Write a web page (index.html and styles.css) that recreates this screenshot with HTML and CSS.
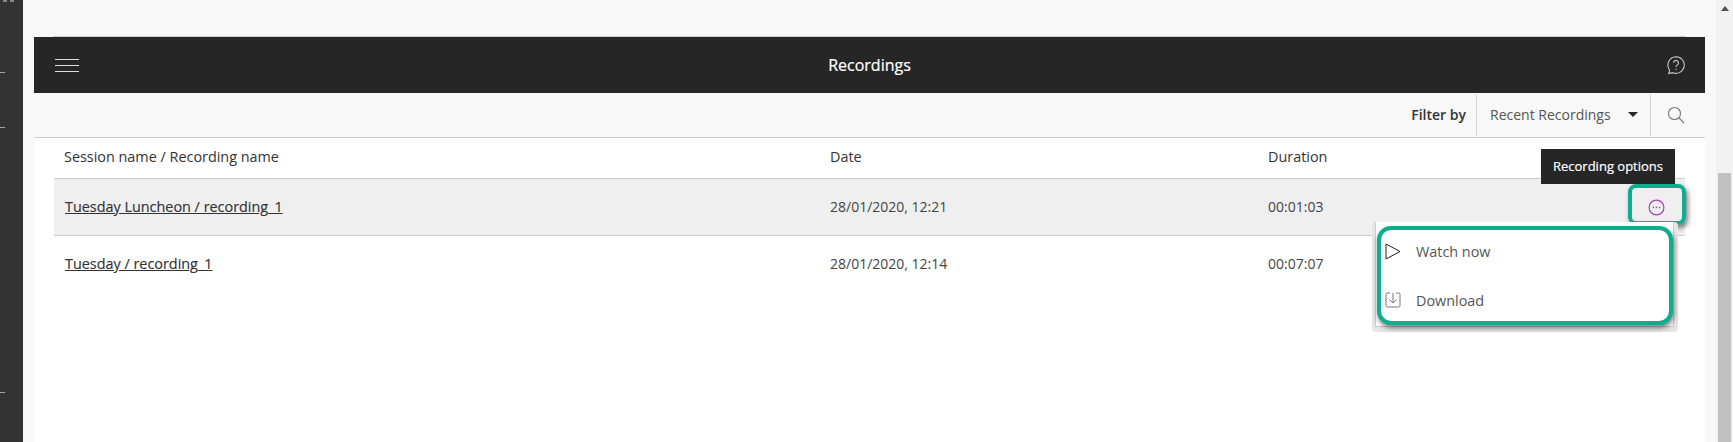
FILE: index.html
```html
<!DOCTYPE html>
<html lang="en">
<head>
  <meta charset="UTF-8" />
  <title>Recordings</title>
  <link rel="stylesheet" href="styles.css">
</head>
<body>
  <div class="rail">
    <div class="rail-dots"><span></span><span></span></div>
    <i class="tick tick-1"></i>
    <i class="tick tick-2"></i>
    <i class="tick tick-3"></i>
  </div>

  <main class="page">
    <div class="top-line"></div>
    <header class="title-bar">
      <svg class="menu-icon" width="24" height="13" viewBox="0 0 24 13"><path d="M0 .5h24M0 6.500h24M0 12.500h24" stroke="#ddd" fill="none"/></svg>
      <h1>Recordings</h1>
      <svg class="help-icon" width="20" height="20" viewBox="0 0 18 18" fill="none" stroke="#ccc" stroke-width="0.95"><path d="M9 1.500a7.500 7.500 0 1 1-3 14.400l-3.600.7.9-3A7.500 7.500 0 0 1 9 1.500z"/><path d="M6.800 7a2.200 2.200 0 1 1 3.400 1.900c-.8.5-1.200 1-1.200 2"/><path d="M9 12.400v1.200"/></svg>
    </header>

    <div class="toolbar">
      <span class="filter-label">Filter by</span>
      <div class="filter-select">Recent Recordings<i class="caret"></i></div>
      <div class="search">
        <svg width="18" height="18" viewBox="0 0 18 18" fill="none" stroke="#777" stroke-width="1.1"><circle cx="7.500" cy="7.500" r="6"/><path d="M12 12l5 5"/></svg>
      </div>
    </div>

    <section class="content">
      <div class="row head">
        <div class="col-name">Session name / Recording name</div>
        <div class="col-date">Date</div>
        <div class="col-dur">Duration</div>
      </div>
      <div class="row rec active">
        <div class="col-name"><a href="#">Tuesday Luncheon / recording_1</a></div>
        <div class="col-date">28/01/2020, 12:21</div>
        <div class="col-dur">00:01:03</div>
      </div>
      <div class="row rec last">
        <div class="col-name"><a href="#">Tuesday / recording_1</a></div>
        <div class="col-date">28/01/2020, 12:14</div>
        <div class="col-dur">00:07:07</div>
      </div>

      <div class="tooltip">Recording options</div>
      <i class="tooltip-tip"></i>
      <div class="options-mark">
        <svg width="17" height="17" viewBox="0 0 17 17" fill="none" stroke="#a83cc4" stroke-width="1.2"><circle cx="8.500" cy="8.500" r="7.400"/><path d="M4.800 8.500h1.400M7.800 8.500h1.400M10.800 8.500h1.400" stroke-width="1.600"/></svg>
      </div>

      <div class="menu">
        <div class="menu-inner">
          <div class="menu-mark">
            <div class="menu-item">
              <svg width="16" height="17" viewBox="0 0 16 17" fill="none" stroke="#222"><path d="M1 1l14 7.500L1 16z"/></svg>
              <span>Watch now</span>
            </div>
            <div class="menu-item">
              <svg width="16" height="16" viewBox="0 0 16 16" fill="none" stroke="#777"><path d="M5 1H2.500A1.500 1.500 0 0 0 1 2.500v11A1.500 1.500 0 0 0 2.500 15h11a1.500 1.500 0 0 0 1.500-1.500v-11A1.500 1.500 0 0 0 13.500 1H11"/><path d="M8 1v10M4.500 7.500L8 11l3.500-3.500"/></svg>
              <span>Download</span>
            </div>
          </div>
        </div>
      </div>
    </section>
  </main>

  <div class="scrollbar">
    <i class="scroll-up"></i>
    <div class="scroll-thumb"></div>
  </div>
</body>
</html>
```

FILE: styles.css
```css
* {
  margin: 0;
  padding: 0;
  box-sizing: border-box;
  font-family: 'Open Sans', sans-serif;
}

html, body {
  height: 100%;
  overflow: hidden;
}

body {
  display: flex;
  background: #f8f8f8;
  color: #333;
  font-size: 14px;
}

/* left strip of the host page */
.rail {
  position: relative;
  width: 23px;
  flex-shrink: 0;
  background: #333;
}

.rail-dots {
  display: flex;
  gap: 3px;
  padding-left: 3px;
}

.rail-dots span {
  width: 4px;
  height: 2px;
  background: #888;
}

.tick {
  position: absolute;
  left: 0;
  width: 5px;
  height: 1px;
  background: #aaa;
}

.tick-1 { top: 72px; }
.tick-2 { top: 127px; }
.tick-3 { top: 392px; }

.page {
  flex: 1;
  display: flex;
  flex-direction: column;
  padding: 36px 11px 0;
}

.top-line {
  height: 1px;
  margin: 0 19px;
  background: #ccc;
}

.title-bar {
  display: grid;
  grid-template-columns: 1fr auto 1fr;
  align-items: center;
  height: 56px;
  padding: 0 21px;
  background: #262626;
}

.title-bar h1 {
  color: #fff;
  font-size: 16px;
  font-weight: 400;
  -webkit-text-stroke: 0.2px #fff;
}

.menu-icon {
  display: block;
}

.help-icon {
  justify-self: end;
  margin-right: -2px;
}

.toolbar {
  display: flex;
  justify-content: flex-end;
  align-items: stretch;
  height: 45px;
  padding: 1px 0;
  border-bottom: 1px solid #ccc;
}

.filter-label {
  align-self: center;
  margin: 0 10px 2px 0;
  font-weight: 600;
}

.filter-select {
  display: flex;
  align-items: center;
  width: 175px;
  padding: 0 0 2px 13px;
  border-left: 1px solid #d4d4d4;
  border-right: 1px solid #d4d4d4;
  color: #555;
}

.caret {
  width: 0;
  height: 0;
  margin-left: 17px;
  border: 5px solid transparent;
  border-top-color: #262626;
  border-bottom: 0;
}

.search {
  display: flex;
  align-items: center;
  justify-content: flex-end;
  width: 54px;
  padding-right: 20px;
}

.content {
  position: relative;
  flex: 1;
  padding: 0 20px;
  background: #fff;
}

.row {
  display: flex;
  align-items: center;
  border-bottom: 1px solid #ccc;
}

.head {
  height: 41px;
  padding: 0 0 3px 10px;
  font-size: 14.4px;
}

.rec {
  height: 57px;
  padding: 0 0 2px 11px;
  color: #444;
}

.last {
  border-bottom: 0;
}

.active {
  background: #efefef;
}

.col-name {
  width: 766px;
}

.rec .col-name {
  width: 765px;
}

.col-date {
  width: 438px;
}

.col-name a {
  color: #333;
  font-size: 14.4px;
  -webkit-text-stroke: 0.15px #333;
}

.tooltip {
  position: absolute;
  top: 11px;
  left: 1507px;
  width: 134px;
  height: 35px;
  background: #262626;
  color: #fff;
  font-size: 13px;
  line-height: 35px;
  text-align: center;
  -webkit-text-stroke: 0.2px #fff;
}

.tooltip-tip {
  position: absolute;
  top: 46px;
  left: 1617px;
  border: 3px solid transparent;
  border-top-color: #262626;
}

.options-mark {
  position: absolute;
  top: 46px;
  left: 1594px;
  display: flex;
  align-items: center;
  justify-content: center;
  width: 58px;
  height: 41px;
  padding: 5px 2px 0 0;
  border: 4px solid #0bae8f;
  border-radius: 8px;
  box-shadow: 2px 3px 5px rgba(0, 0, 0, 0.5);
}

/* grey halo of the popup, with the popup's own thin border inside it */
.menu {
  position: absolute;
  top: 84px;
  left: 1338px;
  width: 306px;
  height: 110px;
  padding: 0 4px 5px 3px;
  background: #e6e6e6;
  border-radius: 4px;
}

.menu-inner {
  height: 105px;
  background: #fff;
  border: 1px solid #ccc;
  border-top: 0;
  padding: 4px 0 0 1px;
}

.menu-mark {
  display: flex;
  flex-direction: column;
  gap: 7px;
  width: 296px;
  height: 99px;
  background: #fff;
  border: 4px solid #0bae8f;
  border-radius: 14px;
  box-shadow: 1px 3px 5px rgba(0, 0, 0, 0.5);
}

.menu-item {
  display: flex;
  align-items: center;
  gap: 15px;
  height: 44px;
  padding-left: 4px;
  color: #555;
  font-size: 14.4px;
}

.menu-item svg {
  flex-shrink: 0;
}

.scrollbar {
  position: relative;
  width: 17px;
  flex-shrink: 0;
  background: #f1f1f1;
}

.scroll-up {
  position: absolute;
  top: 6px;
  left: 5px;
  border: 4px solid transparent;
  border-top: 0;
  border-bottom: 5px solid #505050;
}

.scroll-thumb {
  position: absolute;
  top: 173px;
  left: 2px;
  right: 2px;
  bottom: 0;
  background: #c1c1c1;
}
```
